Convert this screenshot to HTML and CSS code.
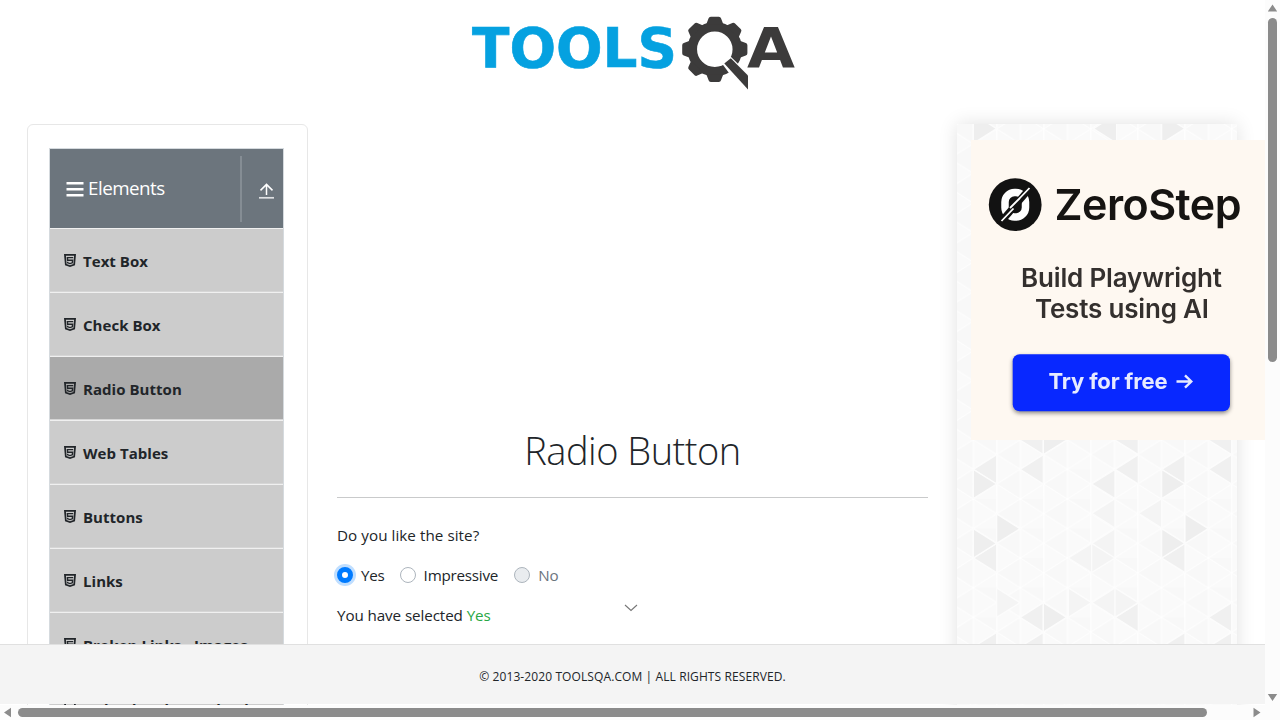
FILE: index.html
```html
<!DOCTYPE html>
<html lang="en">
<head>
<meta charset="utf-8">
<title>ToolsQA - Radio Button</title>
<link rel="stylesheet" href="styles.css">
</head>
<body>
<svg class="defs" aria-hidden="true">
  <symbol id="html5" viewBox="0 0 12 13"><path fill="currentColor" fill-rule="evenodd" d="M0 0h12l-1 11.2L6 13l-5-1.8zM1.9 1.7l.7 8.3L6 11.3l3.4-1.3.7-8.3z"/><path d="M9.2 3.6H3.4l.25 2.7H8.6l-.3 2.5-2.3.8-2.3-.8-.1-1" fill="none" stroke="currentColor" stroke-width="1.4"/></symbol>
</svg>
<div class="window">
  <div class="viewport">
    <header class="header">
      <svg class="logo" width="350" height="95" viewBox="460 5 350 95">
        <text class="logo-tools" x="472" y="67" textLength="205" lengthAdjust="spacingAndGlyphs">TOOLS</text>
        <text class="logo-a" x="747" y="67" textLength="48" lengthAdjust="spacingAndGlyphs">A</text>
        <g fill="#3c3b3b" transform="translate(714.8 49.3)">
          <circle r="22.5" fill="none" stroke="#3c3b3b" stroke-width="9.5"/>
          <path id="tooth" d="M-8.5-25L-6.2-31Q-5.8-32.6-4-32.6H4Q5.8-32.6 6.2-31L8.5-25z"/>
          <use href="#tooth" transform="rotate(45)"/><use href="#tooth" transform="rotate(90)"/>
          <use href="#tooth" transform="rotate(180)"/><use href="#tooth" transform="rotate(225)"/>
          <use href="#tooth" transform="rotate(270)"/><use href="#tooth" transform="rotate(315)"/>
          <path fill="#fff" d="M7 14L16 7.5 34 25v19L24 37z"/>
          <path d="M9.5 14.2L16 9l17.2 17.3v14z"/>
        </g>
      </svg>
    </header>
    <div class="columns">
      <aside class="sidebar">
        <div class="group">
          <div class="group-head">
            <svg width="18" height="16" viewBox="0 0 18 16"><path d="M.5 2.2h17M.5 8.2h17M.5 14.2h17" stroke="#fff" stroke-width="2.6"/></svg>
            <span class="group-title">Elements</span>
            <span class="group-toggle"><svg width="15" height="16" viewBox="0 0 15 16"><path d="M7.5 12V1.5M1.5 7.4l6-6 6 6" fill="none" stroke="#fff" stroke-width="1.5"/><path d="M0 14.8h15" stroke="#dfe1e3" stroke-width="1.7"/></svg></span>
          </div>
          <ul class="menu">
            <li><svg><use href="#html5"/></svg><span>Text Box</span></li>
            <li><svg><use href="#html5"/></svg><span>Check Box</span></li>
            <li class="active"><svg><use href="#html5"/></svg><span>Radio Button</span></li>
            <li><svg><use href="#html5"/></svg><span>Web Tables</span></li>
            <li><svg><use href="#html5"/></svg><span>Buttons</span></li>
            <li><svg><use href="#html5"/></svg><span>Links</span></li>
            <li><svg><use href="#html5"/></svg><span>Broken Links - Images</span></li>
            <li><svg><use href="#html5"/></svg><span>Upload and Download</span></li>
          </ul>
        </div>
      </aside>
      <main class="content">
        <h1>Radio Button</h1>
        <p class="question">Do you like the site?</p>
        <div class="radios">
          <label class="radio checked"><i></i><span>Yes</span></label>
          <label class="radio"><i></i><span>Impressive</span></label>
          <label class="radio disabled"><i></i><span>No</span></label>
        </div>
        <p class="result">You have selected <b>Yes</b></p>
        <svg class="chevron" width="14" height="8" viewBox="0 0 14 8"><path d="M1 1l6 5.5L13 1" fill="none" stroke="#777" stroke-width="1.1"/></svg>
      </main>
      <aside class="promo">
        <svg class="pattern" width="280" height="600" viewBox="0 0 280 600">
          <defs>
            <pattern id="mesh" width="47" height="29.6" patternUnits="userSpaceOnUse" patternTransform="translate(16.3 19.7)">
              <rect width="47" height="29.6" fill="#fafafa"/>
              <path fill="#f8f8f8" d="M0 0l23.5 14.8V-14.8zM23.5 14.8L47 0v29.6z"/>
              <path d="M0 0v29.6M47 0v29.6M23.5 0v29.6M0 0l47 29.6M0 29.6L47 0" fill="none" stroke="#fff" stroke-width="1"/>
            </pattern>
          </defs>
          <rect width="280" height="600" fill="url(#mesh)"/>
          <g transform="translate(-17 306) scale(.33333)" stroke="#fcfcfc" stroke-width="4">
            <path fill="#f0f0f0" d="M100 118l70-44v88zM240 118l70-44v88zM525 118l70-44v88zM665 118l70-44v88zM805 118l70-44v88zM455 162l70-44v88zM100 384l70-44v88zM665 384l70-44v88zM240 562l70-44v88zM525 562l70-44v88zM805 562l70-44v88zM240 30l70-44v88zM525 30l70-44v88zM805 30l70-44v88zM100 651l70-44v88zM240 651l70-44v88zM665 651l70-44v88zM805 651l70-44v88z"/>
            <path fill="#eeeeee" d="M170 162l-70-44v88zM735 162l-70-44v88zM240 296l-70-44v88zM805 296l-70-44v88zM170 340l-70-44v88zM735 340l-70-44v88zM380 562l-70-44v88zM380 30l-70-44v88zM170-904l-70-44v88zM735-904l-70-44v88zM460-904l70-44v88z"/>
            <path fill="#f4f4f4" d="M385 384l70-44v88zM455 340l70-44v88zM455 250l70-44v88zM525 384l-70-44v88zM455 518l-70-44v88zM595 518l-70-44v88zM240 518l-70-44v88zM595 250l70-44v88zM455 518l70-44v88z"/>
          </g>
        </svg>
        <svg class="ad" width="294" height="300" viewBox="971 140 294 300">
          <rect x="971" y="140" width="294" height="300" fill="#fef8f1"/>
          <g class="ad-art">
            <circle cx="1015.2" cy="204.7" r="26.4" fill="#121212"/>
            <rect x="1005" y="192.5" width="20.5" height="24.5" rx="9.5" fill="none" stroke="#fff" stroke-width="7.5"/>
            <path d="M1000 223l31-36" stroke="#121212" stroke-width="7"/>
            <path d="M1001.5 221l12-12.5M1017 201l12.5-13M1010 208l10-10" stroke="#fff" stroke-width="1.8"/>
            <text x="1054.5" y="219.5" font-size="43" font-weight="600" fill="#161412" textLength="187">ZeroStep</text>
            <text x="1021" y="286.5" font-size="26" font-weight="600" fill="#34302e" textLength="201">Build Playwright</text>
            <text x="1035" y="318" font-size="26" font-weight="600" fill="#34302e" textLength="174">Tests using AI</text>
            <rect class="cta" x="1012.7" y="354.3" width="217.3" height="57" rx="7" fill="#0828ff"/>
            <text x="1048.5" y="389" font-size="22" font-weight="700" fill="#e6eaff" textLength="119">Try for free</text>
            <path d="M1176.5 381.5h14.5m-6-6.2l6.3 6.2-6.3 6.2" fill="none" stroke="#e6eaff" stroke-width="2.4"/>
          </g>
        </svg>
      </aside>
    </div>
    <footer class="footer"><span>© 2013-2020 TOOLSQA.COM | ALL RIGHTS RESERVED.</span></footer>
  </div>
  <div class="vbar"><svg width="15" height="705"><path d="M7.5 4.5l4.7 7H2.8zM2.8 694h9.4l-4.7 7z" fill="#8b8b8b"/><rect x="3" y="18" width="9" height="344" rx="4.5" fill="#8b8b8b"/></svg></div>
  <div class="hbar"><svg width="1280" height="15"><path d="M4 7.5l7-4.7v9.4zM1253.5 2.8v9.4l7-4.7z" fill="#8b8b8b"/><rect x="18" y="3" width="1189" height="9" rx="4.5" fill="#8b8b8b"/></svg></div>
</div>
</body>
</html>
```

FILE: styles.css
```css
* { box-sizing: border-box; }
body {
  margin: 0;
  overflow: hidden;
  font-family: "Open Sans", "Noto Sans", sans-serif;
  font-size: 15.2px;
  line-height: 24px;
  color: #212529;
  background: #fff;
}
.defs { position: absolute; width: 0; height: 0; }
.window { display: grid; grid-template: 705px 15px / 1265px 15px; width: 1280px; height: 720px; }
.viewport { position: relative; overflow: hidden; }
.vbar, .hbar { background: #fcfcfc; }
.hbar { grid-column: 1 / 3; }
.vbar svg, .hbar svg { display: block; }
.header { height: 124px; padding: 5px 0 0 460px; }
.logo { display: block; }
.logo-tools, .logo-a { font: bold 55px "DejaVu Sans", sans-serif; }
.logo-tools { fill: #05a1e0; stroke: #05a1e0; stroke-width: .6; }
.logo-a { fill: #3c3b3b; }
.columns { display: flex; height: 600px; padding-left: 27px; }
.sidebar { width: 281px; padding: 23px 23px 0 21px; border: 1px solid #e7e7e7; border-radius: 6px; flex: none; }
.group { width: 235px; border: 1px solid #d5dade; }
.group-head { display: flex; align-items: center; height: 79px; padding-left: 16px; background: #6c757d; color: #fff; font-size: 18.8px; }
.group-head > svg { margin-top: 1px; }
.group-title { width: 152px; margin: -2px 0 0 4px; letter-spacing: -.52px; }
.group-toggle { display: flex; align-items: center; justify-content: flex-end; width: 34px; height: 66px; padding: 5px 0 0; border-left: 2px solid #858d94; }
.menu { list-style: none; margin: 0; padding: 0; }
.menu li { display: flex; align-items: center; height: 64px; padding: 1px 0 0 14px; background: #ccc; border-top: 1px solid #f0f0f0; border-bottom: 1px solid #d6d6d6; font-weight: 700; font-size: 15px; letter-spacing: .04px; }
.menu li.active { background: #aaa; }
.menu svg { width: 12px; height: 13px; margin: -1px 7px 0 0; }
.menu span { white-space: nowrap; }
.content { position: relative; width: 591px; margin-left: 29px; flex: none; padding-top: 301px; }
h1 { height: 73px; margin: 0 0 25px; border-bottom: 1px solid #c9cacb; text-align: center; font-size: 38px; font-weight: 300; line-height: 50px; letter-spacing: -.5px; }
p { margin: 0; }
.question { letter-spacing: .06px; }
.result { letter-spacing: -.09px; }
.radios { display: flex; margin: 16px 0; }
.radio { display: flex; align-items: center; letter-spacing: -.22px; margin-right: 15px; }
.radio i { width: 16px; height: 16px; margin: 0 8px 0 0; border: 1px solid #adb5bd; border-radius: 50%; background: #fff; }
.radio.checked i { border: 5px solid #007bff; box-shadow: 0 0 0 3px #bfdeff; }
.radio.disabled { color: #6c757d; margin-left: 1px; }
.radio.disabled i { background: #e9ecef; }
.result b { color: #28a745; font-weight: 400; }
.chevron { position: absolute; left: 287px; top: 480px; }
.promo { position: relative; width: 280px; height: 600px; margin-left: 29px; flex: none; box-shadow: 0 0 18px rgba(0,0,0,.12); }
.pattern { display: block; }
.ad { position: absolute; left: 14px; top: 16px; }
.ad-art { font-family: Inter, sans-serif; filter: blur(.5px); }
.cta { filter: drop-shadow(0 2px 2px rgba(0,0,0,.45)); }
.footer { position: absolute; left: 0; right: 0; bottom: 1px; height: 59px; display: flex; align-items: center; justify-content: center; padding-top: 4px; background: #f4f4f4; box-shadow: 0 -1px 0 #e0e0e0; font-size: 12px; }
.footer span { letter-spacing: .1px; }
```
